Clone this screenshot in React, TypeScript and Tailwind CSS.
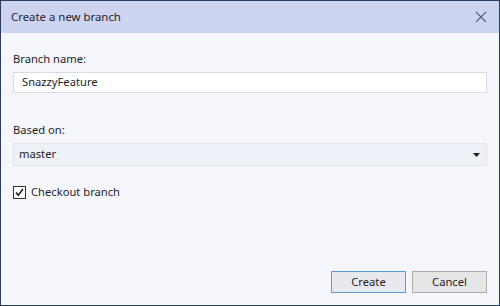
import React from "react";

export default function App() {
  return (
    <div
      className="w-[500px] h-[306px] bg-[#f5f6fb] border border-[#2c3d5e] flex flex-col text-[11.2px] text-[#1e1e1e]"
      style={{ fontFamily: '"Noto Sans", "Open Sans", sans-serif' }}
    >
      <div className="h-[32px] bg-[#ccd4ef] flex items-center justify-between pl-[10px] pr-[12px] shrink-0">
        <span className="text-[#1e1e2e] text-[11.4px]">Create a new branch</span>
        <svg width="12" height="12" viewBox="0 0 12 12" className="text-[#5d6275]">
          <path d="M1 1 L11 11 M11 1 L1 11" stroke="currentColor" strokeWidth="1.1" />
        </svg>
      </div>
      <div className="flex-1 flex flex-col px-[12px] pt-[18px]">
        <div className="leading-[16px]">Branch name:</div>
        <div className="mt-[5px] h-[21px] w-[474px] bg-white border border-[#d9dbe3] flex items-center px-[8px]">
          SnazzyFeature
        </div>
        <div className="mt-[29px] leading-[16px]">Based on:</div>
        <div className="mt-[5px] h-[23px] w-[474px] bg-[#eef0f7] border border-[#e3e5ee] flex items-center justify-between pl-[5px] pr-[6px]">
          <span>master</span>
          <svg width="7" height="4" viewBox="0 0 7 4">
            <path d="M0 0 H7 L3.5 4 Z" fill="#1e1e1e" />
          </svg>
        </div>
        <div className="mt-[18px] flex items-center gap-[5px]">
          <div className="w-[13px] h-[13px] border border-[#333] bg-white flex items-center justify-center">
            <svg width="11" height="11" viewBox="0 0 11 11">
              <path d="M2 5.5 L4.3 8.3 L9 2" stroke="#1e1e1e" strokeWidth="1.5" fill="none" />
            </svg>
          </div>
          <span>Checkout branch</span>
        </div>
        <div className="flex-1" />
        <div className="flex justify-end gap-[6px] pb-[12px]">
          <button className="w-[75px] h-[22px] bg-[#e8e9ef] border border-[#5b9ad9]">Create</button>
          <button className="w-[75px] h-[22px] bg-[#e6e6e6] border border-[#adadad]">Cancel</button>
        </div>
      </div>
    </div>
  );
}
